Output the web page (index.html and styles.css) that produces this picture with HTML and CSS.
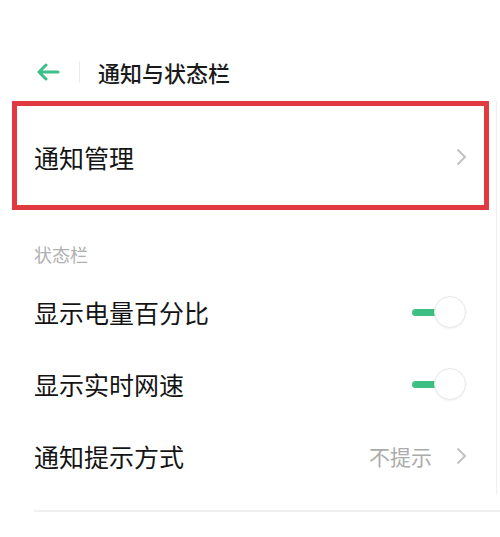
FILE: index.html
```html
<!DOCTYPE html>
<html lang="zh-CN">
<head>
<meta charset="utf-8">
<link rel="stylesheet" href="styles.css">
</head>
<body>
<div class="page">
  <header class="header">
    <svg class="back" width="24" height="18" viewBox="0 0 24 18">
      <path d="M22 9H3M10 2L3 9l7 7" fill="none" stroke="#3cbf88" stroke-width="3" stroke-linecap="round" stroke-linejoin="round"/>
    </svg>
    <span class="sep"></span>
    <h1 class="title">通知与状态栏</h1>
  </header>
  <div class="content">
    <div class="highlight">
      <div class="row row-box">
        <span class="label">通知管理</span>
        <svg class="chev" width="11" height="18" viewBox="0 0 11 18"><path d="M1.5 1.5L9 9l-7.5 7.5" fill="none" stroke="#c2c2c2" stroke-width="2"/></svg>
      </div>
    </div>
    <div class="section">状态栏</div>
    <div class="row">
      <span class="label">显示电量百分比</span>
      <span class="toggle"><span class="track"></span><span class="knob"></span></span>
    </div>
    <div class="row">
      <span class="label">显示实时网速</span>
      <span class="toggle"><span class="track"></span><span class="knob"></span></span>
    </div>
    <div class="row">
      <span class="label">通知提示方式</span>
      <span class="right">
        <span class="value">不提示</span>
        <svg class="chev" width="11" height="18" viewBox="0 0 11 18"><path d="M1.5 1.5L9 9l-7.5 7.5" fill="none" stroke="#c2c2c2" stroke-width="2"/></svg>
      </span>
    </div>
  </div>
  <div class="divider"></div>
</div>
</body>
</html>
```
FILE: styles.css
```css
* { box-sizing: border-box; }
html, body { margin: 0; padding: 0; background: #fff; }
body {
  font-family: "Noto Sans CJK SC", "Noto Sans", sans-serif;
  color: #151515;
  width: 500px;
  height: 537px;
  overflow: hidden;
}
.page { padding-top: 52px; }
.header {
  height: 40px;
  display: flex;
  align-items: center;
  padding-left: 36px;
}
.back { display: block; }
.sep {
  width: 1px;
  height: 22px;
  background: #ececec;
  margin-left: 19px;
  margin-right: 18px;
}
.title {
  margin: 0;
  font-size: 22px;
  font-weight: 500;
  line-height: 30px;
  color: #1a1a1a;
}
.content {
  margin-top: 9px;
  margin-right: 3px;
  padding-bottom: 3px;
  border-right: 1px solid #f0f0f0;
}
.highlight {
  margin-left: 12px;
  margin-right: 7px;
  height: 109px;
  border: 5px solid #e03a40;
  display: flex;
  align-items: center;
}
.row {
  height: 72px;
  display: flex;
  align-items: center;
  justify-content: space-between;
  padding-left: 34px;
  padding-right: 29px;
}
.row-box {
  flex: 1;
  padding-left: 17px;
  padding-right: 17px;
  height: auto;
  margin-top: 3px;
}
.label {
  font-size: 25px;
  line-height: 34px;
  color: #141414;
}
.chev { display: block; }
.section {
  margin-top: 32px;
  margin-bottom: 10px;
  padding-left: 34px;
  font-size: 18px;
  line-height: 24px;
  color: #b0b0b0;
}
.toggle {
  width: 54px;
  height: 32px;
  display: flex;
  align-items: center;
  margin-right: 1px;
}
.track {
  width: 30px;
  height: 7px;
  border-radius: 4px;
  background: #3dbf82;
  margin-right: -8px;
}
.knob {
  width: 32px;
  height: 32px;
  border-radius: 50%;
  background: #fff;
  border: 1px solid #e8e8e8;
  box-shadow: 0 1px 2px rgba(0,0,0,0.06);
  position: relative;
}
.right {
  display: flex;
  align-items: center;
  gap: 24px;
}
.value {
  font-size: 21px;
  line-height: 30px;
  color: #ababab;
}
.divider {
  margin-top: 15px;
  margin-left: 34px;
  height: 2px;
  background: #f0f0f0;
}
```
